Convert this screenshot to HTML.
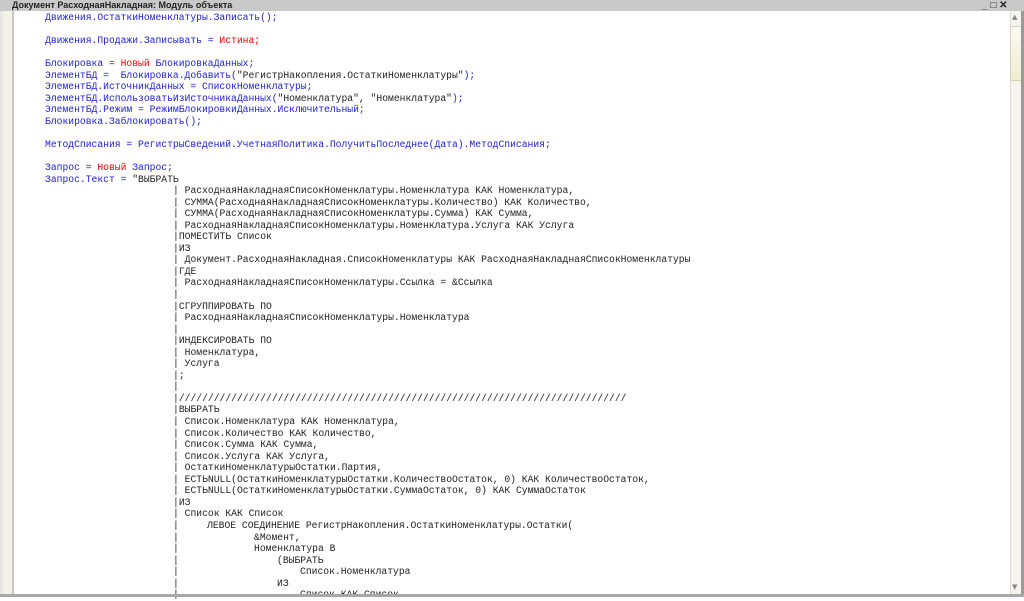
<!DOCTYPE html>
<html><head><meta charset="utf-8"><style>
html,body{margin:0;padding:0;width:1024px;height:597px;overflow:hidden;background:#fff;}
#title{position:absolute;left:0;top:0;width:1024px;height:11px;background:#c9c9c9;font:bold 9px "Liberation Sans",sans-serif;line-height:11px;color:#222;}
#title span{position:absolute;left:12px;top:0}
#left0{position:absolute;left:0;top:11px;width:3px;height:586px;background:#e6e6e6}
#gutter{position:absolute;left:3px;top:11px;width:9px;height:586px;background:#f4f2e6}
#gline{position:absolute;left:12px;top:11px;width:2px;height:586px;background:#c8c8c0}
#sb{position:absolute;left:1010px;top:11px;width:11px;height:583px;background:#f6f4ec;border-left:1px solid #ddd}
#thumb{position:absolute;left:1010px;top:26px;width:12px;height:55px;background:linear-gradient(#fbfaf2,#f0ecd2);border:1px solid #d8d4b8;box-sizing:border-box}
#right{position:absolute;left:1021px;top:11px;width:3px;height:586px;background:#9a9a9a}
#bottom{position:absolute;left:0;top:594px;width:1024px;height:3px;background:#a8a8a8}
.c{position:absolute;font-family:"Liberation Mono",monospace;font-size:9.7px;line-height:11.55px;white-space:pre;color:#222}
.b{color:#2020e0}.r{color:#f00}
</style></head><body>
<div id="title"><span>Документ РасходнаяНакладная: Модуль объекта</span>
<span style="left:982px;font-size:10px">_ &#9633; &#10005;</span></div>
<div id="left0"></div><div id="gutter"></div><div id="gline"></div>
<div id="sb"></div><div id="thumb"></div>
<div style="position:absolute;left:1012px;top:13px;font-size:7px;color:#888;font-family:'DejaVu Sans'">▲</div>
<div style="position:absolute;left:1012px;top:583px;font-size:7px;color:#888;font-family:'DejaVu Sans'">▼</div>
<div id="right"></div>

<div class="c" style="left:45px;top:12px"><span class="b">Движения.ОстаткиНоменклатуры.Записать();</span>

<span class="b">Движения.Продажи.Записывать = </span><span class="r">Истина;</span>

<span class="b">Блокировка = </span><span class="r">Новый </span><span class="b">БлокировкаДанных;</span>
<span class="b">ЭлементБД =  Блокировка.Добавить(</span>"РегистрНакопления.ОстаткиНоменклатуры"<span class="b">);</span>
<span class="b">ЭлементБД.ИсточникДанных = СписокНоменклатуры;</span>
<span class="b">ЭлементБД.ИспользоватьИзИсточникаДанных(</span>"Номенклатура", "Номенклатура"<span class="b">);</span>
<span class="b">ЭлементБД.Режим = РежимБлокировкиДанных.Исключительный;</span>
<span class="b">Блокировка.Заблокировать();</span>

<span class="b">МетодСписания = РегистрыСведений.УчетнаяПолитика.ПолучитьПоследнее(Дата).МетодСписания;</span>

<span class="b">Запрос = </span><span class="r">Новый </span><span class="b">Запрос;</span>
<span class="b">Запрос.Текст = </span>"ВЫБРАТЬ</div>

<div class="c" style="left:173px;top:185.1px">| РасходнаяНакладнаяСписокНоменклатуры.Номенклатура КАК Номенклатура,
| СУММА(РасходнаяНакладнаяСписокНоменклатуры.Количество) КАК Количество,
| СУММА(РасходнаяНакладнаяСписокНоменклатуры.Сумма) КАК Сумма,
| РасходнаяНакладнаяСписокНоменклатуры.Номенклатура.Услуга КАК Услуга
|ПОМЕСТИТЬ Список
|ИЗ
| Документ.РасходнаяНакладная.СписокНоменклатуры КАК РасходнаяНакладнаяСписокНоменклатуры
|ГДЕ
| РасходнаяНакладнаяСписокНоменклатуры.Ссылка = &amp;Ссылка
|
|СГРУППИРОВАТЬ ПО
| РасходнаяНакладнаяСписокНоменклатуры.Номенклатура
|
|ИНДЕКСИРОВАТЬ ПО
| Номенклатура,
| Услуга
|;
|
|/////////////////////////////////////////////////////////////////////////////
|ВЫБРАТЬ
| Список.Номенклатура КАК Номенклатура,
| Список.Количество КАК Количество,
| Список.Сумма КАК Сумма,
| Список.Услуга КАК Услуга,
| ОстаткиНоменклатурыОстатки.Партия,
| ЕСТЬNULL(ОстаткиНоменклатурыОстатки.КоличествоОстаток, 0) КАК КоличествоОстаток,
| ЕСТЬNULL(ОстаткиНоменклатурыОстатки.СуммаОстаток, 0) КАК СуммаОстаток
|ИЗ
| Список КАК Список
|
|
|
|
|
|
|</div>
<div class="c" style="left:207px;top:520.1px">ЛЕВОЕ СОЕДИНЕНИЕ РегистрНакопления.ОстаткиНоменклатуры.Остатки(</div>
<div class="c" style="left:254px;top:531.6px">&amp;Момент,
Номенклатура В</div>
<div class="c" style="left:277px;top:554.7px">(ВЫБРАТЬ</div>
<div class="c" style="left:300px;top:566.3px">Список.Номенклатура</div>
<div class="c" style="left:277px;top:577.8px">ИЗ</div>
<div class="c" style="left:300px;top:589.4px">Список КАК Список</div>
<div id="bottom"></div>
</body></html>
